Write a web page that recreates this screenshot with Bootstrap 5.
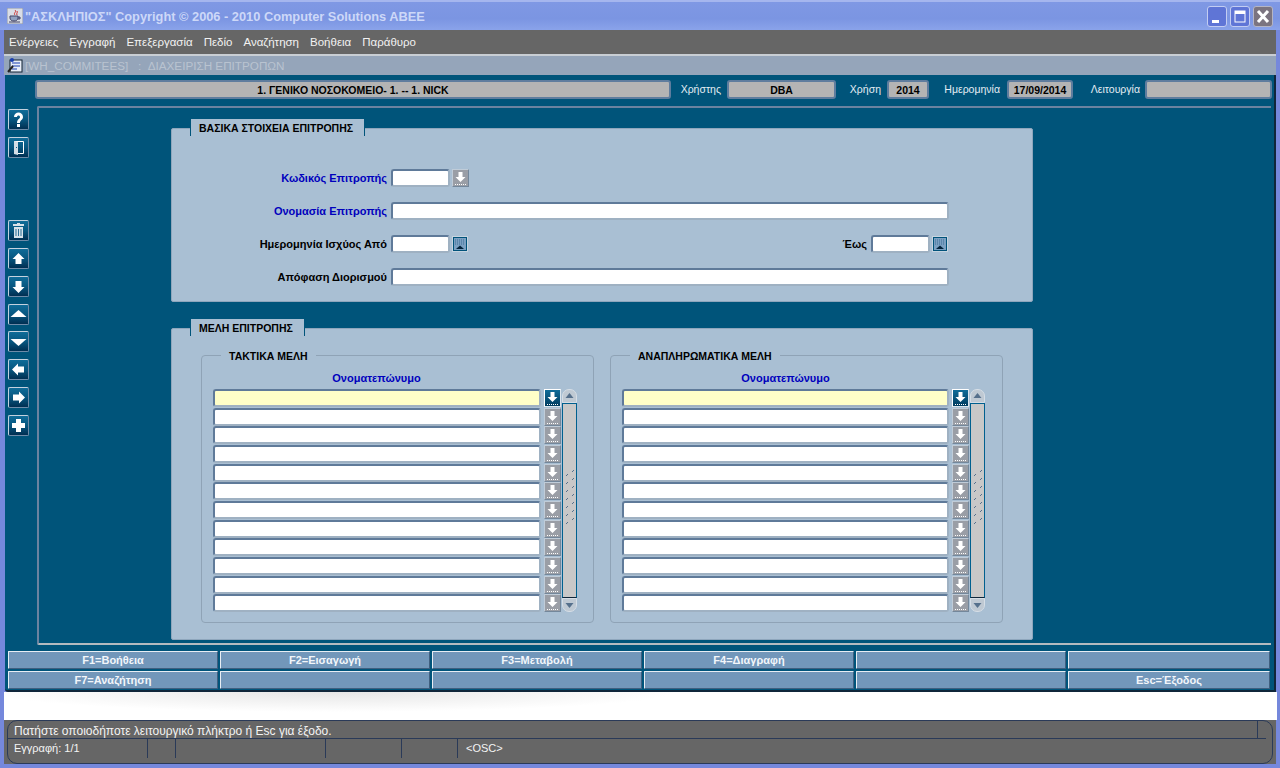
<!DOCTYPE html>
<html lang="el">
  <head>
    <meta charset="UTF-8" />
    <title>ΑΣΚΛΗΠΙΟΣ</title>
    <link href="https://cdn.jsdelivr.net/npm/bootstrap@5.3.3/dist/css/bootstrap.min.css" rel="stylesheet" />
    <style>
      html, body { height: 768px; overflow: hidden; }
      body { font-family: "Liberation Sans", Arial, sans-serif; font-size: 11px; background: #fff; color: #000; }
      .app-window { width: 1280px; height: 768px; background: #7588dc; padding: 0 4px 4px 4px; }
      /* title bar */
      .title-bar { height: 30px; margin: 0 -4px; padding: 0 7px 0 7px; border-top: 2px solid #a5b6ee; background: linear-gradient(#7f98e4, #7b95e2 60%, #8aa3ea); }
      .title-text { font-weight: 700; font-size: 12.8px; color: #cdd8f8; margin-left: 2px; padding-top: 1px; white-space: nowrap; }
      .win-btn { width: 20px; height: 21px; margin-left: 3px; border: 1px solid #c3cdf2; border-radius: 3px; background: #5f75d6; }
      .win-btn.win-close { background: #7b7480; border-color: #b5b5c4; }
      /* menu */
      .menu-bar { height: 24px; background: #666; color: #f2f2f2; padding: 2px 0 0 5px; gap: 11px; font-size: 11.5px; }
      /* inner window */
      .inner-title { height: 21px; background: #95a5ba; border-top: 2px solid #c9ced4; color: #b9c3d0; padding-left: 3px; font-size: 11.7px; white-space: pre; }
      .desk { height: 617px; margin-left: 1px; background: #00547a; border-right: 2px solid #10263a; border-bottom: 2px solid #10263a; border-bottom-left-radius: 3px; }
      .info-bar { height: 19px; margin-top: 5px; }
      .info-field { height: 19px; background: #b4b4b4; border: 2px solid #5f7d9e; border-radius: 3px; font-weight: 700; font-size: 10.5px; line-height: 16px; text-align: center; }
      .info-label { color: #e4edf3; font-size: 10.5px; line-height: 19px; text-align: right; }
      .work-row { height: 539px; margin-top: 7px; }
      .tool-col { width: 32px; padding: 3px 0 0 3px; gap: 7px; }
      .tool-btn { width: 21px; height: 21px; border: 1px solid; border-color: #c4d2df #6e8ba8 #6e8ba8 #c4d2df; border-radius: 2px; background: linear-gradient(#0f6c98, #07567f 50%, #002f52); color: #fff; }
      .tool-btn svg { display: block; }
      .tool-gap { margin-top: 55px; }
      .tool-tight { margin-top: -1px; }
      .canvas-frame { width: 1234px; height: 539px; border: 2px solid #6b83a0; border-right: 0; border-bottom-color: #b4babf; border-radius: 2px 0 0 2px; padding: 20px 0 0 132px; }
      /* form panels */
      .form-panel { width: 862px; background: #a9bfd3; border: 1px solid #8ea6bc; border-radius: 2px; position: relative; }
      .panel-top { height: 174px; padding-top: 40px; }
      .panel-members { height: 312px; margin-top: 26px; padding: 26px 0 0 29px; }
      .panel-tab { position: absolute; left: 18px; top: -10px; height: 17px; padding: 0 11px 0 8px; background: #a9bfd3; border-left: 1px solid #00547a; border-right: 1px solid #00547a; font-weight: 700; font-size: 10.5px; line-height: 19px; white-space: nowrap; }
      .form-row { height: 18px; margin-bottom: 15px; }
      .field-caption { width: 215px; margin-right: 4px; font-weight: 700; text-align: right; white-space: nowrap; }
      .label-req { color: #0000bd; }
      .text-box { height: 18px; background: #fff; border: 2px solid; border-color: #5f7a99 #9fb1c2 #9fb1c2 #5f7a99; border-radius: 3px; }
      .box-code { width: 59px; }
      .box-wide { width: 558px; }
      .pick-btn { width: 17px; height: 18px; margin-left: 2px; background: #9a9ea6; border: 1px solid; border-color: #c0ccd8 #73879b #73879b #c0ccd8; }
      .pick-btn.pick-live { background: linear-gradient(#0f6c98, #003c60); border-color: #fff #dce6ee #dce6ee #fff; }
      .cal-btn { width: 16px; height: 16px; margin: 1px 0 1px 2px; background: #00527a; border: 1px solid #c7d4df; }
      .member-group { width: 393px; height: 268px; border: 1px solid #8fa3b6; border-radius: 4px; position: relative; padding: 15px 0 0 11px; }
      .group-legend { position: absolute; left: 19px; top: -7px; padding: 0 8px; background: #a9bfd3; font-weight: 700; font-size: 10.5px; line-height: 14px; }
      .list-head { height: 18px; width: 327px; color: #0000bd; font-weight: 700; text-align: center; line-height: 14px; }
      .member-row { height: 18.67px; }
      .member-row .text-box { width: 328px; }
      .member-group + .member-group .member-row .text-box { width: 327px; }
      .member-row .pick-btn { margin-left: 3px; }
      .scroll-col { width: 15px; height: 223px; margin-left: 1px; }
      .scroll-cap { height: 14px; background: #bfc9d3; border: 1px solid #d6dee6; color: #56708c; }
      .scroll-up { border-radius: 7px 7px 0 0; }
      .scroll-down { border-radius: 0 0 7px 7px; }
      .scroll-track { flex: 1; background: #c8c8c8; border-left: 1px solid #00608f; border-right: 1px solid #00608f; border-top: 1px solid #00608f; border-bottom: 1px solid #10263a; }
      /* function keys */
      .fkey-grid { display: grid; grid-template-columns: repeat(5, 210px) 202px; gap: 2px; margin: 6px 0 0 3px; }
      .btn.fkey-btn { height: 18px; padding: 0; border: 1px solid; border-color: #e8eef4 #3f5f7f #3f5f7f #e8eef4; border-radius: 1px; background: #7297ba; color: #f2f6fa; font-size: 11px; font-weight: 700; line-height: 15px; }
      /* status */
      .gap-strip { height: 28px; margin: 0 -1px 0 0; background: radial-gradient(ellipse 340px 20px at 330px 0, #e6e6e6, #fff); }
      .status-area { height: 44px; background: #666; padding: 0 3px; color: #f4f4f4; font-size: 11px; }
      .status-box { height: 44px; border: 1px solid #2a3a58; border-radius: 10px; }
      .status-line { height: 18px; border-bottom: 1px solid #2a3a58; padding-left: 6px; margin-right: 6px; font-size: 12px; }
      .status-line span { padding-top: 2px; }
      .status-cell { height: 100%; border-right: 1px solid #2a3a58; }
      .status-cell2 { height: 19px; padding-left: 6px; border-right: 1px solid #2a3a58; line-height: 19px; }
    </style>
  </head>
  <body>
    <div class="app-window d-flex flex-column">
      <div class="title-bar d-flex align-items-center">
        <svg width="16" height="16" viewBox="0 0 16 16">
          <rect width="16" height="16" fill="#d9dde6" stroke="#8a93a8" />
          <path d="M8 2c2 2-2 3 0 5M10 3c1 2-1 2 0 4" stroke="#c33" fill="none" />
          <path d="M3 8h8v2c0 2-2 3-4 3s-4-1-4-3zM11 9h2v2h-2M2 14h11" stroke="#446" fill="#8fa0c0" />
        </svg>
        <span class="title-text">"ΑΣΚΛΗΠΙΟΣ" Copyright © 2006 - 2010 Computer Solutions ABEE</span>
        <div class="ms-auto d-flex">
          <div class="win-btn d-flex align-items-end justify-content-center"><svg width="18" height="19" viewBox="0 0 18 19"><rect x="4" y="13" width="7" height="3" fill="#fff" /></svg></div>
          <div class="win-btn"><svg width="18" height="19" viewBox="0 0 18 19"><rect x="4" y="4" width="10" height="11" fill="none" stroke="#fff" /><rect x="4" y="4" width="10" height="3" fill="#fff" /></svg></div>
          <div class="win-btn win-close"><svg width="18" height="19" viewBox="0 0 18 19"><path d="M4 4l10 11M14 4L4 15" stroke="#fff" stroke-width="3" /></svg></div>
        </div>
      </div>

      <div class="menu-bar d-flex align-items-center">
        <span>Ενέργειες</span><span>Εγγραφή</span><span>Επεξεργασία</span><span>Πεδίο</span><span>Αναζήτηση</span><span>Βοήθεια</span><span>Παράθυρο</span>
      </div>

      <div class="inner-title d-flex align-items-center">
        <svg width="17" height="17" viewBox="0 0 17 17" style="margin-right:1px">
          <rect x="3" y="3" width="12" height="12" fill="#e8eef8" stroke="#123" />
          <path d="M5 6h8M5 9h8M5 12h5" stroke="#1a3fb0" />
          <path d="M1 15L6 9" stroke="#222" stroke-width="2" />
          <circle cx="5" cy="3" r="2" fill="#1a3fb0" />
        </svg>
        <span>[WH_COMMITEES]   :  ΔΙΑΧΕΙΡΙΣΗ ΕΠΙΤΡΟΠΩΝ</span>
      </div>

      <div class="desk">
        <div class="info-bar d-flex">
          <div class="info-field" style="margin-left:30px;width:636px">1. ΓΕΝΙΚΟ ΝΟΣΟΚΟΜΕΙΟ- 1. -- 1. NICK</div>
          <div class="info-label" style="width:50px">Χρήστης</div>
          <div class="info-field" style="margin-left:6px;width:109px">DBA</div>
          <div class="info-label" style="width:45px">Χρήση</div>
          <div class="info-field" style="margin-left:6px;width:42px">2014</div>
          <div class="info-label" style="width:71px">Ημερομηνία</div>
          <div class="info-field" style="margin-left:7px;width:66px">17/09/2014</div>
          <div class="info-label" style="width:67px">Λειτουργία</div>
          <div class="info-field" style="margin-left:5px;width:127px"></div>
        </div>

        <div class="work-row d-flex">
          <div class="tool-col d-flex flex-column">
            <div class="tool-btn"><svg width="19" height="19" viewBox="0 0 19 19"><path d="M5 7c0-6 9-6 9 0 0 3-3 3-3 6H8c0-4 3-4 3-6 0-2-3-2-3 0z" fill="#fff" /><rect x="8" y="14" width="3" height="3" fill="#fff" /></svg></div>
            <div class="tool-btn"><svg width="19" height="19" viewBox="0 0 19 19"><path d="M5.500 3.500h9v12h-9z" fill="none" stroke="#fff" /><path d="M5 3l4 1v13l-4-1z" fill="#d4dde6" /><rect x="7" y="9" width="1" height="1" fill="#0b5c88" /></svg></div>
            <div class="tool-btn tool-gap"><svg width="19" height="19" viewBox="0 0 19 19"><path d="M8 2h3v1h4v2H4V3h4z" fill="#d8e2ea" /><path d="M5 6h9v11H5z" fill="#d8e2ea" /><path d="M7 8v7M9.500 8v7M12 8v7" stroke="#2b6f95" /></svg></div>
            <div class="tool-btn"><svg width="19" height="19" viewBox="0 0 19 19"><path d="M9.500 4l6 6h-3v5h-6v-5h-3z" fill="#fff" /></svg></div>
            <div class="tool-btn"><svg width="19" height="19" viewBox="0 0 19 19"><path d="M9.500 16l6-6h-3V4h-6v6h-3z" fill="#fff" /></svg></div>
            <div class="tool-btn"><svg width="19" height="19" viewBox="0 0 19 19"><path d="M9.500 5l8 7h-16z" fill="#fff" /></svg></div>
            <div class="tool-btn tool-tight"><svg width="19" height="19" viewBox="0 0 19 19"><path d="M9.500 14l8-7h-16z" fill="#fff" /></svg></div>
            <div class="tool-btn"><svg width="19" height="19" viewBox="0 0 19 19"><path d="M3 9.500l6-6v3h6v6H9v3z" fill="#fff" /></svg></div>
            <div class="tool-btn"><svg width="19" height="19" viewBox="0 0 19 19"><path d="M16 9.500l-6-6v3H4v6h6v3z" fill="#fff" /></svg></div>
            <div class="tool-btn"><svg width="19" height="19" viewBox="0 0 19 19"><path d="M7 3h5v4h4v5h-4v4H7v-4H3V7h4z" fill="#fff" /></svg></div>
          </div>

          <div class="canvas-frame">
            <div class="form-panel panel-top">
              <div class="panel-tab">ΒΑΣΙΚΑ ΣΤΟΙΧΕΙΑ ΕΠΙΤΡΟΠΗΣ</div>
              <div class="form-row d-flex align-items-center">
                <div class="field-caption label-req">Κωδικός Επιτροπής</div>
                <div class="text-box box-code"></div>
                <div class="pick-btn js-arrow"></div>
              </div>
              <div class="form-row d-flex align-items-center">
                <div class="field-caption label-req">Ονομασία Επιτροπής</div>
                <div class="text-box box-wide"></div>
              </div>
              <div class="form-row d-flex align-items-center">
                <div class="field-caption">Ημερομηνία Ισχύος Από</div>
                <div class="text-box box-code"></div>
                <div class="cal-btn js-cal"></div>
                <div class="fw-bold text-end" style="width:399px">Έως</div>
                <div class="text-box box-code" style="margin-left:4px"></div>
                <div class="cal-btn js-cal"></div>
              </div>
              <div class="form-row d-flex align-items-center">
                <div class="field-caption">Απόφαση Διορισμού</div>
                <div class="text-box box-wide"></div>
              </div>
            </div>

            <div class="form-panel panel-members">
              <div class="panel-tab">ΜΕΛΗ ΕΠΙΤΡΟΠΗΣ</div>
              <div class="d-flex" style="gap:16px">
                <div class="member-group">
                  <div class="group-legend">ΤΑΚΤΙΚΑ ΜΕΛΗ</div>
                  <div class="list-head">Ονοματεπώνυμο</div>
                  <div class="d-flex js-list"></div>
                </div>
                <div class="member-group">
                  <div class="group-legend">ΑΝΑΠΛΗΡΩΜΑΤΙΚΑ ΜΕΛΗ</div>
                  <div class="list-head">Ονοματεπώνυμο</div>
                  <div class="d-flex js-list"></div>
                </div>
              </div>
            </div>
          </div>
        </div>

        <div class="fkey-grid">
          <button class="btn fkey-btn">F1=Βοήθεια</button>
          <button class="btn fkey-btn">F2=Εισαγωγή</button>
          <button class="btn fkey-btn">F3=Μεταβολή</button>
          <button class="btn fkey-btn">F4=Διαγραφή</button>
          <button class="btn fkey-btn"></button>
          <button class="btn fkey-btn"></button>
          <button class="btn fkey-btn">F7=Αναζήτηση</button>
          <button class="btn fkey-btn"></button>
          <button class="btn fkey-btn"></button>
          <button class="btn fkey-btn"></button>
          <button class="btn fkey-btn"></button>
          <button class="btn fkey-btn">Esc=Έξοδος</button>
        </div>
      </div>

      <div class="gap-strip"></div>

      <div class="status-area">
        <div class="status-box">
          <div class="status-line d-flex align-items-center justify-content-between">
            <span>Πατήστε οποιοδήποτε λειτουργικό πλήκτρο ή Esc για έξοδο.</span>
            <div class="status-cell" style="margin-right:8px"></div>
          </div>
          <div class="d-flex align-items-center">
            <div class="status-cell2" style="width:140px">Εγγραφή: 1/1</div>
            <div class="status-cell2" style="width:28px"></div>
            <div class="status-cell2" style="width:150px"></div>
            <div class="status-cell2" style="width:76px"></div>
            <div class="status-cell2" style="width:56px"></div>
            <div class="ps-2">&lt;OSC&gt;</div>
          </div>
        </div>
      </div>
    </div>

    <script>
      const arrowSvg =
        '<svg width="15" height="16" viewBox="0 0 15 16" class="d-block"><path d="M7.500 12l5-5H9.500V2h-4v5H2.500z" fill="#fff"/><path d="M2 14.500h11" stroke="#fff" stroke-dasharray="1 1"/></svg>';
      const calSvg =
        '<svg width="14" height="14" viewBox="0 0 14 14" class="d-block"><rect x="1" y="1" width="12" height="12" fill="#7ba0c2"/><path d="M2 3h10M2 5h10M2 7h10" stroke="#3f6d94" stroke-dasharray="1 1"/><path d="M7 8.500l4 3.500H3z" fill="#04243c"/></svg>';

      document.querySelectorAll(".js-arrow").forEach((el) => (el.innerHTML = arrowSvg));
      document.querySelectorAll(".js-cal").forEach((el) => (el.innerHTML = calSvg));

      // 12 rows in each members list, the first one is the current record
      const rows = Array.from({ length: 12 }, (_, i) => `
        <div class="member-row d-flex">
          <div class="text-box" ${i === 0 ? 'style="background:#ffffc8"' : ""}></div>
          <div class="pick-btn ${i === 0 ? "pick-live" : ""}">${arrowSvg}</div>
        </div>`).join("");

      const dots = Array.from({ length: 7 }, (_, i) =>
        `<path d="M9 ${i * 8 + 2}l2-2M3 ${i * 8 + 6}l2-2" stroke="#56708c"/>`).join("");

      document.querySelectorAll(".js-list").forEach((el) => {
        el.innerHTML = `
          <div>${rows}</div>
          <div class="scroll-col d-flex flex-column">
            <div class="scroll-cap scroll-up"><svg width="13" height="12" viewBox="0 0 13 12" class="d-block"><path d="M6.500 3l4 5h-8z" fill="currentColor"/></svg></div>
            <div class="scroll-track"><svg width="13" height="60" viewBox="0 0 13 60" class="d-block" style="margin-top:66px">${dots}</svg></div>
            <div class="scroll-cap scroll-down"><svg width="13" height="12" viewBox="0 0 13 12" class="d-block"><path d="M6.500 9l4-5h-8z" fill="currentColor"/></svg></div>
          </div>`;
      });
    </script>
    <script src="https://cdn.jsdelivr.net/npm/bootstrap@5.3.3/dist/js/bootstrap.bundle.min.js"></script>
  </body>
</html>
